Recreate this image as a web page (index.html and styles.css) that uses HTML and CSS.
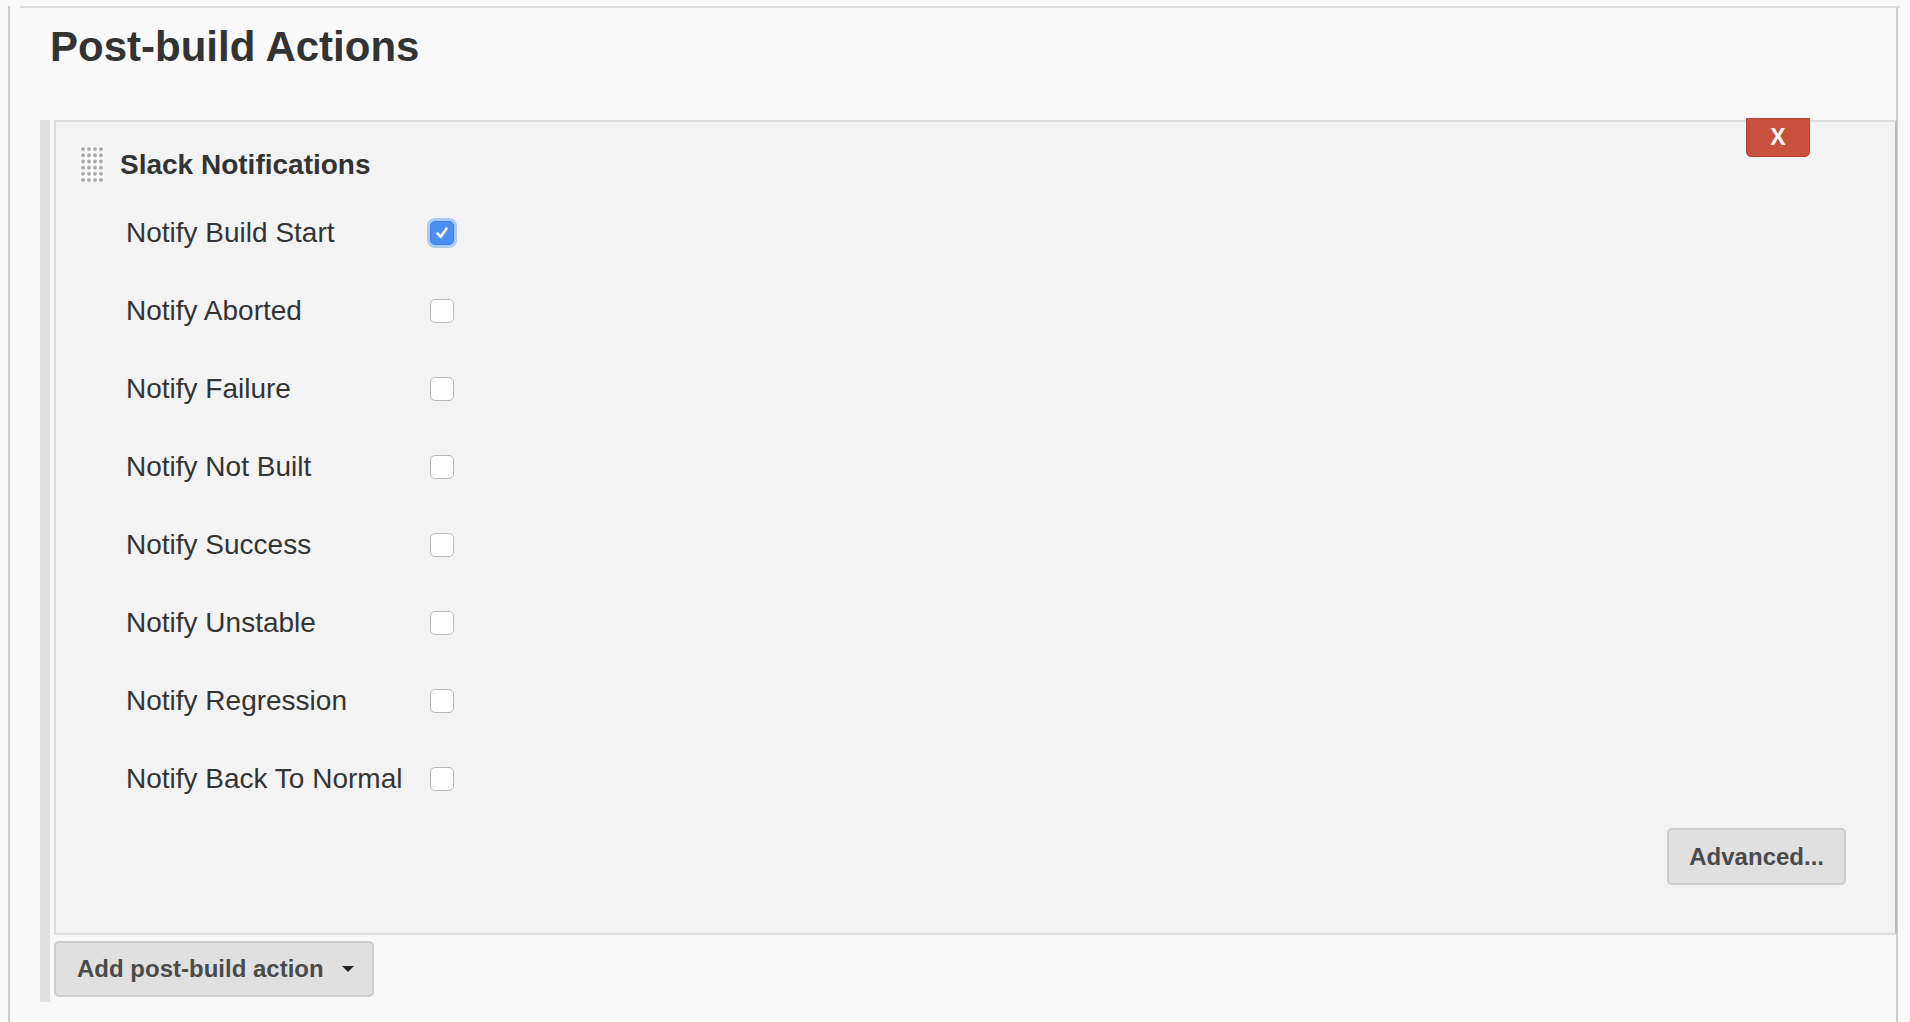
FILE: index.html
```html
<!DOCTYPE html>
<html lang="en">
  <head>
    <meta charset="UTF-8" />
    <title>Post-build Actions</title>
    <link rel="stylesheet" href="styles.css">
  </head>
  <body>
    <div class="section">
      <div class="section-header">
        <h1>Post-build Actions</h1>
      </div>

      <!-- One configured post-build step -->
      <div class="chunk">
        <div class="panel">
          <button class="delete-btn">X</button>
          <div class="panel-title">
            <span class="grip"></span>
            <span>Slack Notifications</span>
          </div>
          <div class="rows">
            <div class="row">
              <label>Notify Build Start</label>
              <span class="checkbox checked">
                <svg width="16" height="16" viewBox="0 0 16 16"><path d="M3.5 8.5 L6.8 11.8 L12.5 3.5" fill="none" stroke="#fff" stroke-width="2.6" stroke-linecap="round" stroke-linejoin="round"/></svg>
              </span>
            </div>
            <div class="row"><label>Notify Aborted</label><span class="checkbox"></span></div>
            <div class="row"><label>Notify Failure</label><span class="checkbox"></span></div>
            <div class="row"><label>Notify Not Built</label><span class="checkbox"></span></div>
            <div class="row"><label>Notify Success</label><span class="checkbox"></span></div>
            <div class="row"><label>Notify Unstable</label><span class="checkbox"></span></div>
            <div class="row"><label>Notify Regression</label><span class="checkbox"></span></div>
            <div class="row"><label>Notify Back To Normal</label><span class="checkbox"></span></div>
          </div>
          <div class="advanced">
            <button class="btn">Advanced...</button>
          </div>
        </div>
        <button class="btn add-btn">Add post-build action <span class="caret"></span></button>
      </div>
    </div>
  </body>
</html>
```

FILE: styles.css
```css
* {
  box-sizing: border-box;
}
body {
  margin: 0;
  background: #f9f9f9;
  font-family: "Liberation Sans", Arial, sans-serif;
  color: #333;
}
.section {
  margin: 0 12px 0 8px;
  border-left: 2px solid #ccc;
  border-right: 2px solid #ccc;
  min-height: 1022px;
}
.section-header {
  margin: 6px -4px 0 10px;
  border-top: 2px solid #ddd;
  padding: 14px 0 0 30px;
}
h1 {
  margin: 0;
  font-size: 42px;
  line-height: 50px;
  font-weight: bold;
  color: #333;
}
/* repeated chunk with the grey bar on its left */
.chunk {
  margin: 48px -1px 0 30px;
  border-left: 10px solid #e0e0e0;
  padding: 0 0 5px 4px;
}
.panel {
  position: relative;
  border: 2px solid #ddd;
  border-right-color: #bbb;
  background: #f3f3f3;
  padding: 24px 49px 48px 24px;
}
.delete-btn {
  position: absolute;
  top: -4px;
  right: 85px;
  width: 64px;
  height: 39px;
  padding: 0;
  border: 1px solid #b04231;
  border-radius: 0 0 5px 5px;
  background: #c9513f;
  color: #fff;
  font-family: "Liberation Sans", Arial, sans-serif;
  font-weight: bold;
  font-size: 23px;
  line-height: 37px;
}
.panel-title {
  display: flex;
  align-items: center;
  gap: 16px;
  height: 37px;
  font-size: 28px;
  font-weight: bold;
}
.grip {
  width: 24px;
  height: 37px;
  background: radial-gradient(circle, #a8a8a8 1.4px, rgba(168, 168, 168, 0) 2.4px) 0 0 / 6px 6.2px, #fbfbfb;
}
.rows {
  margin: 11px 0 0 46px;
}
.row {
  display: grid;
  grid-template-columns: 304px auto;
  align-items: center;
  justify-items: start;
  height: 78px;
  font-size: 28px;
}
.checkbox {
  display: flex;
  align-items: center;
  justify-content: center;
  width: 24px;
  height: 24px;
  border: 1px solid #b9b9b9;
  border-radius: 5px;
  background: #fff;
}
.checkbox.checked {
  border-color: #3d7fe6;
  background: #4b8ff2;
  box-shadow: 0 0 0 3px #a9c9f7;
}
.advanced {
  display: flex;
  justify-content: flex-end;
  margin-top: 10px;
}
.btn {
  height: 57px;
  padding: 0 20px;
  border: 2px solid #ccc;
  border-radius: 5px;
  background: #e0e0e0;
  color: #4a4a4a;
  font-family: "Liberation Sans", Arial, sans-serif;
  font-weight: bold;
  font-size: 24px;
}
.add-btn {
  display: flex;
  align-items: center;
  gap: 18px;
  height: 56px;
  margin-top: 6px;
  padding: 0 18px 0 21px;
}
.caret {
  width: 0;
  height: 0;
  border-left: 6.5px solid transparent;
  border-right: 6.5px solid transparent;
  border-top: 6px solid #222;
}
```
